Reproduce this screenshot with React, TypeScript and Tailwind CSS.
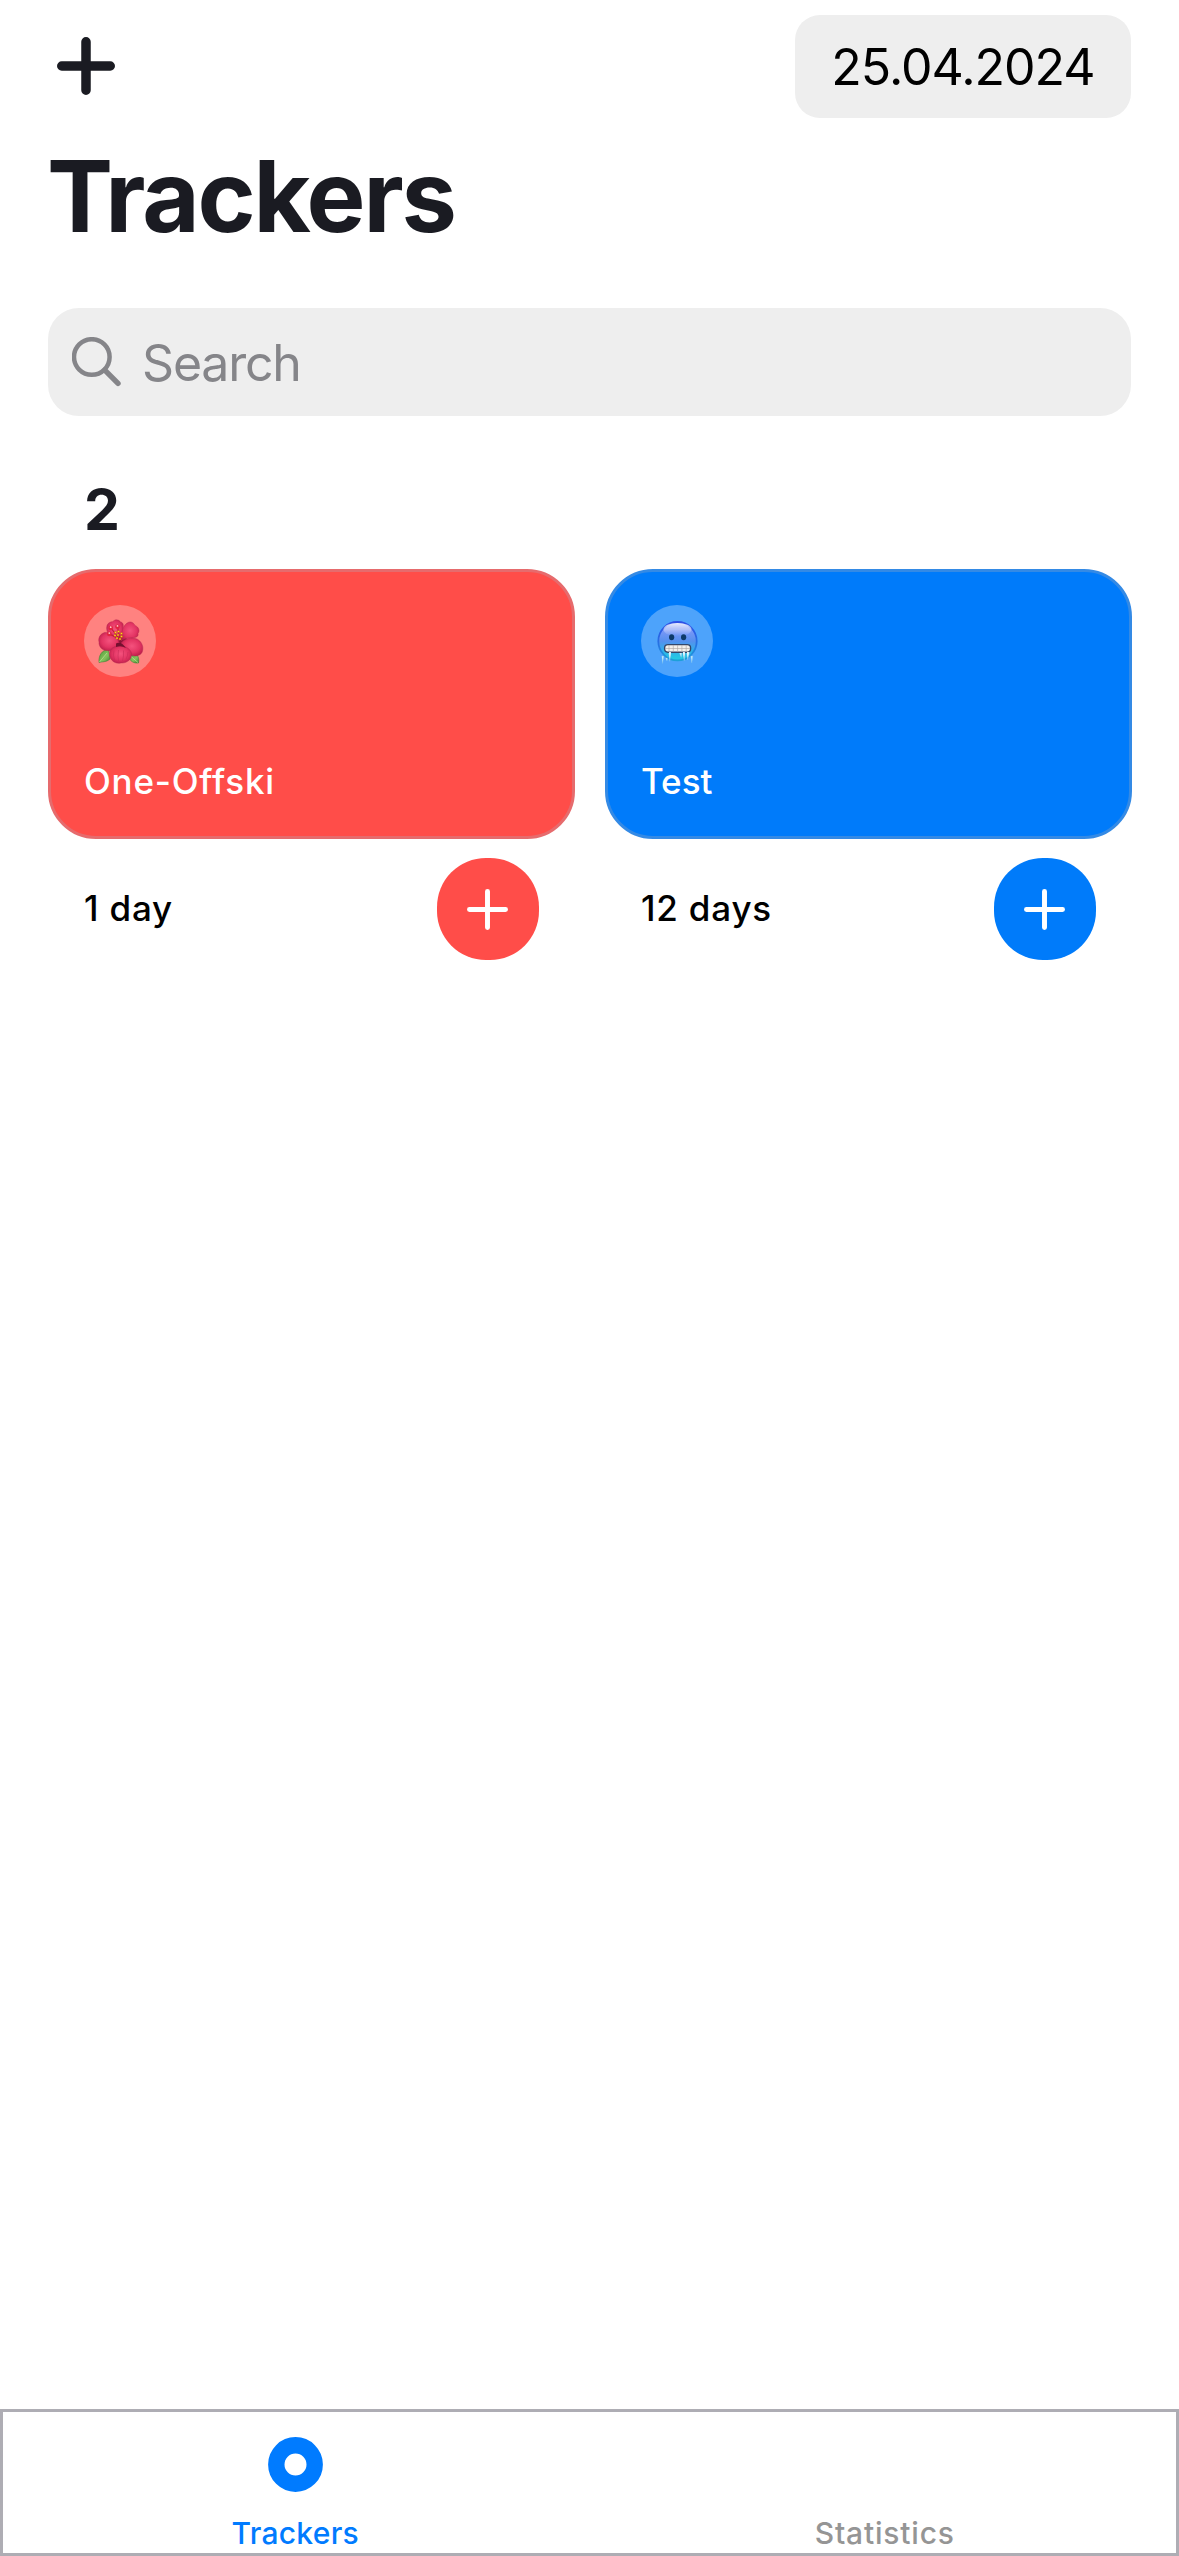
import type { ReactNode } from "react";

function PlusIcon({ className, strokeWidth }: { className: string; strokeWidth: number }) {
  const end = 58 - strokeWidth / 2;
  const start = strokeWidth / 2;
  return (
    <svg viewBox="0 0 58 58" className={className} fill="none" stroke="currentColor" strokeWidth={strokeWidth} strokeLinecap="round">
      <path d={`M29 ${start}V${end}M${start} 29H${end}`} />
    </svg>
  );
}

function SearchIcon() {
  return (
    <svg viewBox="0 0 49 50" className="h-[50px] w-[49px]" fill="none" stroke="#858589" strokeLinecap="round">
      <circle cx="19.8" cy="20" r="17.8" strokeWidth="4.5" />
      <path d="M32.8 33.2L46 46.4" strokeWidth="5.4" />
    </svg>
  );
}

function HibiscusIcon() {
  return (
    <svg viewBox="0 0 72 72" className="size-[72px]">
      <defs>
        <radialGradient id="petal" cx="50%" cy="45%" r="60%">
          <stop offset="0" stopColor="#f4527d" />
          <stop offset="0.6" stopColor="#e33463" />
          <stop offset="1" stopColor="#b91d48" />
        </radialGradient>
        <linearGradient id="leaf" x1="0" y1="0" x2="1" y2="1">
          <stop offset="0" stopColor="#4c9a38" />
          <stop offset="0.6" stopColor="#84c25c" />
          <stop offset="1" stopColor="#3d7f2e" />
        </linearGradient>
      </defs>
      <g fill="url(#leaf)" stroke="#3f7d35" strokeWidth="0.6">
        <path d="M15 57.5C14.5 50 18 45 24.5 44.5L26 54C22 57.5 18 56.5 15 57.5Z" />
        <path d="M44 51L52 49C55 51.5 55 55 54.5 58C50 58.5 46 56.5 44 51Z" />
      </g>
      <path d="M15.5 57L23 48M54 57.5L47 51.5" stroke="#b7df8e" strokeWidth="0.8" />
      <circle cx="36" cy="38" r="8" fill="#8c1236" />
      <g fill="url(#petal)" stroke="#b32350" strokeWidth="0.4">
        <path d="M35 36C27 34 21 27 23 20.5C24.5 17 27 17 29 16.5C31 14 35 14.5 36.5 17C40 17.5 39.5 21 39 25C39 30 38 34 35 36Z" />
        <path d="M37 36C37 29 38.5 20 44 17.5C47 16 50 18 51 20.5C55 22 56 26 54 28.5C55 32 51 33 47 33C43 33 39 34 37 36Z" />
        <path d="M36 39C33 32 27 26.5 20.5 27.5C16 29 14 33 15 37C14.5 42 19 46 23 45.5C28 47 34 43 36 39Z" />
        <path d="M37 38C41 33 48 32 53 34C57 36 60 41 58.5 46C58 50 52 52 48 50.5C43 50 39 44 37 38Z" />
        <path d="M35.5 41C40 40.5 46 43 47.5 48C48.5 54 43 58.5 37 58C31 59.5 25.5 55 25.5 49C25.5 43 31 41 35.5 41Z" />
      </g>
      <path d="M32 38.5Q37 36 42 43Q37 40 32 42Z" fill="#74102f" />
      <path d="M30 45.5Q28.5 50 30.5 55M34.5 45Q33.5 51 34.5 56M39.5 45.5Q40 51 38.5 56M44 47Q44 51 42 54" fill="none" stroke="#c72b57" strokeWidth="0.6" />
      <path d="M36 35L27 23M36 35L33.5 22M35 34L25.5 29" stroke="#c2183f" strokeWidth="1.2" />
      <g fill="#ffcf1f" stroke="#a44a08" strokeWidth="0.3">
        <circle cx="31.5" cy="27.5" r="1.1" />
        <circle cx="34.5" cy="26.5" r="1.1" />
        <circle cx="37.5" cy="28.5" r="1.1" />
        <circle cx="31" cy="30.5" r="1.1" />
        <circle cx="34" cy="30" r="1.1" />
        <circle cx="37.5" cy="31.5" r="1.1" />
        <circle cx="33" cy="33.2" r="1.1" />
        <circle cx="36" cy="34" r="1.1" />
      </g>
      <g fill="#e0243f">
        <circle cx="26.7" cy="23" r="2.3" />
        <circle cx="33.5" cy="21.7" r="2.3" />
        <circle cx="25.3" cy="28.9" r="2.3" />
      </g>
      <g fill="#ffc3c6">
        <circle cx="26.7" cy="22.2" r="0.9" />
        <circle cx="33.5" cy="20.9" r="0.9" />
        <circle cx="25.3" cy="28.1" r="0.9" />
      </g>
    </svg>
  );
}

function ColdFaceIcon() {
  return (
    <svg viewBox="0 0 72 72" className="size-[72px]">
      <defs>
        <linearGradient id="cold" x1="0" y1="0" x2="0" y2="1">
          <stop offset="0" stopColor="#4a68ee" />
          <stop offset="0.2" stopColor="#7d98f7" />
          <stop offset="0.5" stopColor="#5590ee" />
          <stop offset="0.75" stopColor="#2fb0ea" />
          <stop offset="1" stopColor="#20cfe0" />
        </linearGradient>
        <linearGradient id="rim" x1="0" y1="0" x2="0" y2="1">
          <stop offset="0" stopColor="#2f50e6" />
          <stop offset="0.6" stopColor="#2673e2" />
          <stop offset="1" stopColor="#1da0d8" />
        </linearGradient>
        <linearGradient id="shine" x1="0" y1="0" x2="0" y2="1">
          <stop offset="0" stopColor="#ffffff" stopOpacity="0.9" />
          <stop offset="0.6" stopColor="#ffffff" stopOpacity="0.3" />
          <stop offset="1" stopColor="#ffffff" stopOpacity="0" />
        </linearGradient>
      </defs>
      <circle cx="36.5" cy="36.2" r="19.2" fill="url(#cold)" stroke="url(#rim)" strokeWidth="1.8" />
      <ellipse cx="36.5" cy="24.5" rx="14" ry="6.6" fill="url(#shine)" />
      <ellipse cx="30.6" cy="32.2" rx="2.6" ry="3" fill="#0d3a69" />
      <ellipse cx="42.6" cy="32.2" rx="2.6" ry="3" fill="#0d3a69" />
      <g fill="#c9edfb" stroke="#7cc2ea" strokeWidth="0.3">
        <path d="M20.8 51H22.8L21.6 58.5Z" />
        <path d="M24.7 53H26.5L26 56Z" />
        <path d="M27.5 47H30L28.8 56.5Z" />
        <path d="M38 47H41L40.2 52.5Z" />
        <path d="M41.8 47H44.2L43.2 56Z" />
        <path d="M45.5 47H48.5L46.7 55Z" />
        <path d="M49.8 51H51.8L50.8 58Z" />
      </g>
      <rect x="23.6" y="39.6" width="26" height="7.6" rx="3.4" fill="#f4f0ec" stroke="#34466a" strokeWidth="1.4" />
      <path d="M24 43.5H49M28 40V47M32.3 40V47M36.6 40V47M40.9 40V47M45.2 40V47" stroke="#aba29f" strokeWidth="0.6" />
      <path d="M28 47H30L28.9 53ZM41.9 47H44L42.9 52ZM46 47H48L46.7 52Z" fill="#e9fbff" />
    </svg>
  );
}

type Tracker = {
  name: string;
  nameClass: string;
  days: string;
  fill: string;
  border: string;
  icon: ReactNode;
};

const trackers: Tracker[] = [
  {
    name: "One-Offski",
    nameClass: "tracking-[0.78px]",
    days: "1 day",
    fill: "bg-[#ff4d49]",
    border: "border-[#e66b6d]",
    icon: <HibiscusIcon />,
  },
  {
    name: "Test",
    nameClass: "tracking-[0px]",
    days: "12 days",
    fill: "bg-[#007bfa]",
    border: "border-[#348ae5]",
    icon: <ColdFaceIcon />,
  },
];

function TrackerCard({ tracker }: { tracker: Tracker }) {
  return (
    <article>
      <div className={`flex h-[270px] flex-col justify-between rounded-[48px] border-[3px] px-[33px] pt-[33px] pb-[35px] ${tracker.fill} ${tracker.border}`}>
        <span className="size-[72px] rounded-full bg-white/30">{tracker.icon}</span>
        <h3 className={`text-[35px] leading-[40px] font-[470] text-white ${tracker.nameClass}`}>{tracker.name}</h3>
      </div>
      <div className="mt-[19px] flex items-center justify-between px-9">
        <span className="pb-[2px] text-[35px] leading-[40px] font-[480] tracking-[0.8px] text-black">{tracker.days}</span>
        <button aria-label="Add day" className={`flex size-[102px] items-center justify-center rounded-[49px] pr-px text-white ${tracker.fill}`}>
          <PlusIcon className="size-[41px]" strokeWidth={7} />
        </button>
      </div>
    </article>
  );
}

export default function App() {
  return (
    <div className="flex h-[2556px] w-[1179px] flex-col bg-white font-['Inter',sans-serif] text-[#1a1b22]">
      <main className="flex-1 pt-[15px] pr-[47px] pl-12">
        <header className="mr-px flex h-[103px] items-center justify-between">
          <button aria-label="Add tracker" className="mb-px ml-[9px]">
            <PlusIcon className="size-[58px]" strokeWidth={9.5} />
          </button>
          <div className="flex h-[103px] w-[336px] items-center justify-center rounded-[25px] bg-[#eeeeee] text-[50px] leading-none tracking-[-1px] text-black">
            25.04.2024
          </div>
        </header>
        <h1 className="mt-7 -ml-px text-[99px] leading-[100px] font-bold tracking-[-2.15px]">Trackers</h1>
        <div className="mt-[62px] mr-px flex h-[108px] items-center gap-[21px] rounded-[31px] bg-[#eeeeee] pl-6">
          <SearchIcon />
          <span className="pt-px text-[50px] leading-[60px] tracking-[-1.2px] text-[#858589]">Search</span>
        </div>
        <h2 className="mt-16 ml-9 text-[57px] leading-[60px] font-bold">2</h2>
        <section className="mt-[29px] grid grid-cols-2 gap-[30px]">
          {trackers.map((tracker) => (
            <TrackerCard key={tracker.name} tracker={tracker} />
          ))}
        </section>
      </main>
      <nav className="grid h-[147px] grid-cols-2 border-[3px] border-[#aeadb4] text-[30px] leading-[24px] font-[450]">
        <div className="flex flex-col items-center pt-[25px] pr-[2px] text-[#007bff]">
          <svg viewBox="0 0 55 55" className="size-[55px]">
            <circle cx="27.5" cy="27.5" r="19.2" fill="none" stroke="currentColor" strokeWidth="16.4" />
          </svg>
          <span className="mt-[29px] tracking-[0.3px]">Trackers</span>
        </div>
        <div className="flex flex-col items-center pt-[109px] pl-1 text-[#959595]">
          <span className="tracking-[0.8px]">Statistics</span>
        </div>
      </nav>
    </div>
  );
}
